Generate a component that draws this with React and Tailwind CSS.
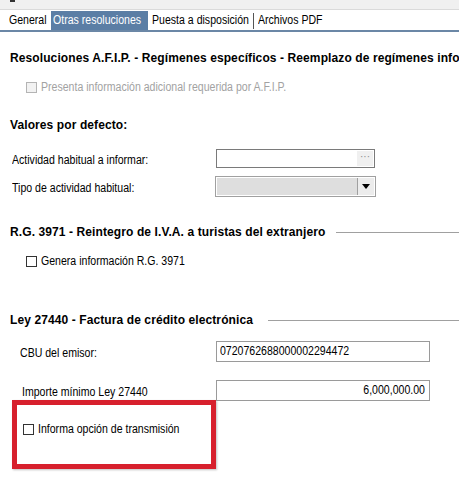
// Configuración — pestaña "Otras resoluciones"
const SANS = 'font-["Liberation_Sans",Arial,sans-serif]';
const BOLD = 'font-["Liberation_Sans",Arial,sans-serif] font-bold';

// The form font is narrower than Arial: squeeze the glyphs horizontally.
function T({ children, right }) {
  return (
    <span
      className={`inline-block whitespace-nowrap text-[12.5px] scale-x-[0.845] ${right ? 'origin-right' : 'origin-left'}`}
    >
      {children}
    </span>
  );
}

function Checkbox({ disabled }) {
  return (
    <span
      className={
        disabled
          ? 'w-[11px] h-[11px] border border-[#b4b4b4] bg-[#f2f2f2] shrink-0'
          : 'w-[11px] h-[11px] border border-[#333] bg-white shrink-0'
      }
    />
  );
}

function Heading({ children, gap }) {
  return (
    <div className="flex items-center h-[18px] pl-[10px]">
      <span className={`${BOLD} text-[12px] tracking-[0.1px] text-black whitespace-nowrap`}>{children}</span>
      {gap && <span className={`flex-1 h-px bg-[#a0a0a0] ${gap}`} />}
    </div>
  );
}

export default function App() {
  return (
    <div className={`${SANS} w-[459px] h-[479px] bg-white overflow-hidden text-black`}>
      {/* window title strip, cut off */}
      <div className="h-[10px] bg-[#f0f0f0] border-b border-[#dadada] pl-[10px]">
        <div className="w-[5px] h-[2px] bg-[#333]" />
      </div>

      {/* tab strip */}
      <div className="flex items-stretch h-[22px] pt-[1px] border-b-2 border-[#6b87a6] pl-[6px]">
        <span className="w-[45px] flex items-center pl-[3px]"><T>General</T></span>
        <span className="w-[97px] flex items-center pl-[2px] bg-[#5b7ea5] text-white"><T>Otras resoluciones</T></span>
        <span className="w-[105px] flex items-center pl-[4px]"><T>Puesta a disposición</T></span>
        <span className="w-px h-[16px] self-center bg-[#555]" />
        <span className="flex items-center pl-[4px]"><T>Archivos PDF</T></span>
      </div>

      <div className="mt-[17px]">
        <Heading>Resoluciones A.F.I.P. - Regímenes específicos - Reemplazo de regímenes informativos</Heading>
      </div>

      <div className="flex items-center gap-[4px] h-[18px] mt-[11px] pl-[26px] text-[#a2a2a2]">
        <Checkbox disabled />
        <T>Presenta información adicional requerida por A.F.I.P.</T>
      </div>

      <div className="mt-[20px]">
        <Heading>Valores por defecto:</Heading>
      </div>

      <div className="flex items-center h-[19px] mt-[15px]">
        <span className="w-[216px] pl-[12px]"><T>Actividad habitual a informar:</T></span>
        <div className="w-[159px] h-full border border-[#7a7a7a] bg-white flex justify-end p-px">
          <span className="w-[16px] bg-[#f0f0f0] flex items-center justify-center text-[#8a8a8a] text-[10px] leading-none pb-[3px]">
            ···
          </span>
        </div>
      </div>

      <div className="flex items-center h-[21px] mt-[8px]">
        <span className="w-[215px] pl-[12px]"><T>Tipo de actividad habitual:</T></span>
        <div className="w-[161px] h-full border border-[#a0a0a0] bg-white flex p-px">
          <div className="flex-1 bg-[#dedede]" />
          <div className="w-[17px] border-l border-[#a0a0a0] bg-[#ececec] flex items-center justify-center">
            <svg width="8" height="5" viewBox="0 0 8 5">
              <path d="M0 0h8L4 5z" fill="#000" />
            </svg>
          </div>
        </div>
      </div>

      <div className="mt-[26px]">
        <Heading gap="ml-[11px]">R.G. 3971 - Reintegro de I.V.A. a turistas del extranjero</Heading>
      </div>

      <div className="flex items-center gap-[4px] h-[18px] mt-[11px] pl-[26px]">
        <Checkbox />
        <T>Genera información R.G. 3971</T>
      </div>

      <div className="mt-[41px]">
        <Heading gap="ml-[15px]">Ley 27440 - Factura de crédito electrónica</Heading>
      </div>

      <div className="flex items-center h-[21px] mt-[12px]">
        <span className="w-[216px] pl-[20px]"><T>CBU del emisor:</T></span>
        <div className="w-[214px] h-full border border-[#9a9a9a] bg-white flex items-center px-[3px]">
          <T>0720762688000002294472</T>
        </div>
      </div>

      <div className="flex items-center h-[21px] mt-[18px]">
        <span className="w-[216px] pl-[22px]"><T>Importe mínimo Ley 27440</T></span>
        <div className="w-[214px] h-full border border-[#9a9a9a] bg-white flex items-center justify-end px-[4px]">
          <T right>6,000,000.00</T>
        </div>
      </div>

      {/* highlighted option */}
      <div className="ml-[12px] mt-[-1px] w-[204px] h-[69px] border-[5px] border-[#d7202d] shadow-[1px_1px_2px_rgba(0,0,0,0.25)] flex items-center pb-[10px] pl-[6px] gap-[4px]">
        <Checkbox />
        <T>Informa opción de transmisión</T>
      </div>
    </div>
  );
}
